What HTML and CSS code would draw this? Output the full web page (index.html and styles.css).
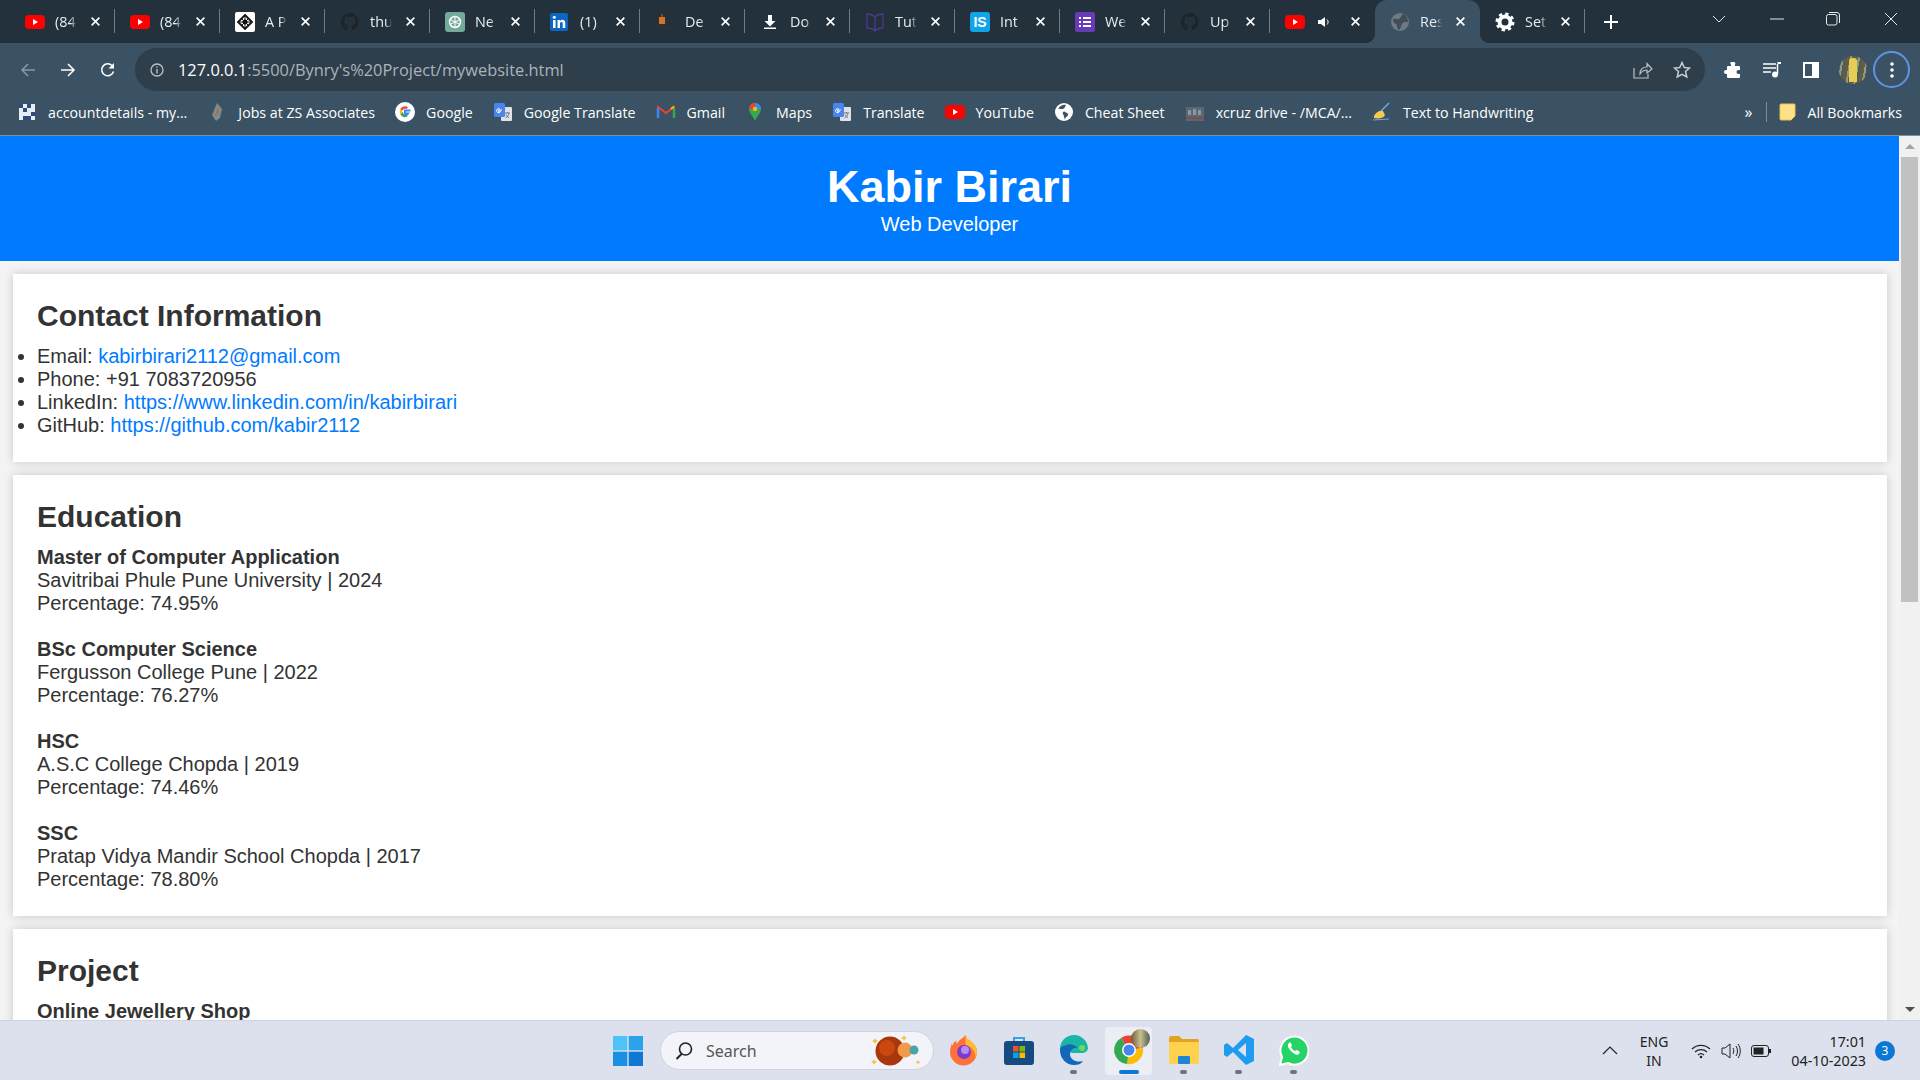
FILE: index.html
```html
<!DOCTYPE html>
<html lang="en">
<head>
<meta charset="utf-8">
<title>Resume</title>
<link rel="stylesheet" href="styles.css">
</head>
<body>
<svg class="defs" width="0" height="0" aria-hidden="true">
  <defs>
    <symbol id="yt" viewBox="0 0 20 20"><rect y="3" width="20" height="14" rx="4" fill="#f00"/><path d="M8 7l5 3-5 3z" fill="#fff"/></symbol>
    <symbol id="gh" viewBox="0 0 20 20"><path d="M10 1a9 9 0 0 0-3 17.500v-3c-2.500.5-3-1-3.200-1.700-.3-.6-1-1.200-.2-1.200.8 0 1.400.8 1.600 1.200.9 1.400 2.200 1 2.700.8.100-.6.300-1 .6-1.300-2.200-.2-4.300-1-4.300-4.500 0-1 .3-1.800.9-2.400-.1-.3-.4-1.200.1-2.400 0 0 .8-.3 2.500.9a8 8 0 0 1 4.600 0c1.700-1.200 2.500-.9 2.500-.9.500 1.200.2 2.100.1 2.400.6.600.9 1.400.9 2.400 0 3.500-2.100 4.300-4.300 4.500.4.300.7.900.7 1.700v3.500A9 9 0 0 0 10 1z" fill="#1d2327"/></symbol>
    <symbol id="gt" viewBox="0 0 20 20"><rect x="8" y="5" width="11" height="14" rx="1" fill="#dfe3e8"/><rect x="1" y="1" width="11" height="14" rx="1.500" fill="#4a84ee"/><path d="M9 8H5.500v1.300h2a2 2 0 1 1-.6-2.100" fill="none" stroke="#fff" stroke-width="1"/><path d="M12 11h5m-2.500-1v1m-2 5c2-1 3-3 3.500-5m-3 1.500c.6 1.500 1.500 2.500 3 3" fill="none" stroke="#6c747c"/></symbol>
    <symbol id="x" viewBox="0 0 10 10"><path d="M1.500 1.500l7 7m0-7l-7 7" stroke="#fff" stroke-width="1.500" fill="none"/></symbol>
  </defs>
</svg>
<div class="desktop">
  <header class="chrome">
    <div class="tabstrip">
      <div class="tab"><svg class="fav" width="20" height="20"><use href="#yt"/></svg><span class="tab-title">(84</span><svg class="tab-x" width="11" height="11"><use href="#x"/></svg></div>
      <div class="tab"><svg class="fav" width="20" height="20"><use href="#yt"/></svg><span class="tab-title">(84</span><svg class="tab-x" width="11" height="11"><use href="#x"/></svg></div>
      <div class="tab"><svg class="fav" width="20" height="20" viewBox="0 0 20 20"><rect width="20" height="20" rx="2" fill="#fff"/><path d="M10 3l7 7-7 7-7-7z" fill="none" stroke="#111" stroke-width="1.800"/><path d="M3 10h14M10 3v14M6 6l8 8M14 6l-8 8" stroke="#111"/><circle cx="10" cy="10" r="2.500" fill="#111"/></svg><span class="tab-title">A P</span><svg class="tab-x" width="11" height="11"><use href="#x"/></svg></div>
      <div class="tab"><svg class="fav" width="20" height="20"><use href="#gh"/></svg><span class="tab-title">thu</span><svg class="tab-x" width="11" height="11"><use href="#x"/></svg></div>
      <div class="tab"><svg class="fav" width="20" height="20" viewBox="0 0 20 20"><rect width="20" height="20" rx="3" fill="#74aa9c"/><circle cx="10" cy="10" r="5.500" fill="none" stroke="#fff" stroke-width="1.500"/><path d="M10 4.500v11M5 7.500l10 5M15 7.500l-10 5" stroke="#fff"/></svg><span class="tab-title">Ne</span><svg class="tab-x" width="11" height="11"><use href="#x"/></svg></div>
      <div class="tab"><svg class="fav" width="18" height="20" viewBox="0 0 18 18"><rect width="18" height="18" rx="2" fill="#0a66c2"/><rect x="3" y="7" width="2.600" height="8" fill="#fff"/><circle cx="4.300" cy="4.300" r="1.500" fill="#fff"/><path d="M7.500 7h2.400v1.200c.5-.8 1.300-1.400 2.500-1.400 2.200 0 2.900 1.300 2.900 3.500V15h-2.600v-4.200c0-1-.3-1.800-1.300-1.800s-1.400.8-1.400 1.800V15H7.500z" fill="#fff"/></svg><span class="tab-title tab-title-li">(1)</span><svg class="tab-x" width="11" height="11"><use href="#x"/></svg></div>
      <div class="tab"><svg class="fav" width="20" height="20" viewBox="0 0 20 20"><path d="M4 5h6v7H4z" fill="#d9731e"/><path d="M6 5V2h2v3" fill="#8a4a12"/><path d="M3 14h6l6 3" fill="none" stroke="#333" stroke-width="1.500"/></svg><span class="tab-title">De</span><svg class="tab-x" width="11" height="11"><use href="#x"/></svg></div>
      <div class="tab"><svg class="fav" width="20" height="20" viewBox="0 0 20 20"><path d="M8 3h4v6h3.500L10 14.500 4.500 9H8zM4 15.500h12V17H4z" fill="#fff"/></svg><span class="tab-title">Do</span><svg class="tab-x" width="11" height="11"><use href="#x"/></svg></div>
      <div class="tab"><svg class="fav" width="20" height="20" viewBox="0 0 20 20"><path d="M10 5C8 3 5 2 2 2v14c3 0 6 1 8 3 2-2 5-3 8-3V2c-3 0-6 1-8 3zm0 0v14" fill="none" stroke="#4c3a8a" stroke-width="1.300"/></svg><span class="tab-title">Tut</span><svg class="tab-x" width="11" height="11"><use href="#x"/></svg></div>
      <div class="tab"><svg class="fav" width="20" height="20" viewBox="0 0 20 20"><rect width="20" height="20" rx="3" fill="#10a5ea"/><text class="fav-text" x="10" y="15">IS</text></svg><span class="tab-title">Int</span><svg class="tab-x" width="11" height="11"><use href="#x"/></svg></div>
      <div class="tab"><svg class="fav" width="20" height="20" viewBox="0 0 20 20"><rect width="20" height="20" rx="2" fill="#673ab7"/><path d="M8 6h8M8 10h8M8 14h8" stroke="#fff" stroke-width="1.800"/><path d="M4 6h2M4 10h2M4 14h2" stroke="#fff" stroke-width="1.800"/></svg><span class="tab-title">We</span><svg class="tab-x" width="11" height="11"><use href="#x"/></svg></div>
      <div class="tab"><svg class="fav" width="20" height="20"><use href="#gh"/></svg><span class="tab-title">Up</span><svg class="tab-x" width="11" height="11"><use href="#x"/></svg></div>
      <div class="tab tab-audio"><svg class="fav" width="20" height="20"><use href="#yt"/></svg><svg class="tab-speaker" width="14" height="14" viewBox="0 0 14 14"><path d="M1 5h3l4-3v10L4 9H1z" fill="#fff"/><path d="M10 4.500c1.500 1.500 1.500 3.500 0 5" fill="none" stroke="#fff"/></svg><svg class="tab-x" width="11" height="11"><use href="#x"/></svg></div>
      <div class="tab tab-active"><svg class="fav" width="20" height="20" viewBox="0 0 20 20"><circle cx="10" cy="10" r="9" fill="#6f7a83"/><path d="M3 7c3-1 4 1 6 0s2-4 4-5c3 1 5 4 5 8-3 0-5 0-6 2s-1 4-3 6c-3-2-1-5-3-6S3 10 3 7z" fill="#3f4d58"/></svg><span class="tab-title">Res</span><svg class="tab-x" width="11" height="11"><use href="#x"/></svg></div>
      <div class="tab tab-last"><svg class="fav" width="20" height="20" viewBox="0 0 20 20"><circle cx="10" cy="10" r="5.500" fill="none" stroke="#fff" stroke-width="4"/><circle cx="10" cy="10" r="8" fill="none" stroke="#fff" stroke-width="3" stroke-dasharray="3.200 3.080"/></svg><span class="tab-title">Set</span><svg class="tab-x" width="11" height="11"><use href="#x"/></svg></div>
      <svg class="newtab" width="16" height="16" viewBox="0 0 16 16"><path d="M8 1v14M1 8h14" stroke="#fff" stroke-width="2"/></svg>
      <div class="winctrl">
        <svg class="win-list" width="14" height="8" viewBox="0 0 14 8"><path d="M1 1l6 6 6-6" fill="none" stroke="#dfe4e8"/></svg>
        <svg class="win-min" width="14" height="2" viewBox="0 0 14 2"><path d="M0 1h14" stroke="#e6eaed"/></svg>
        <svg class="win-max" width="14" height="14" viewBox="0 0 14 14"><rect x=".5" y="2.500" width="10.500" height="10.500" rx="2" fill="none" stroke="#e6eaed"/><path d="M3 .5h8a2.500 2.500 0 0 1 2.500 2.500v8" fill="none" stroke="#e6eaed"/></svg>
        <svg class="win-close" width="14" height="14" viewBox="0 0 14 14"><path d="M1 1l12 12M13 1L1 13" stroke="#e6eaed"/></svg>
      </div>
    </div>
    <div class="toolbar">
      <svg class="nav" width="16" height="16" viewBox="0 0 16 16"><path d="M15 8H2M8 2L2 8l6 6" fill="none" stroke="#8a99a5" stroke-width="1.500"/></svg>
      <svg class="nav" width="16" height="16" viewBox="0 0 16 16"><path d="M1 8h13M8 2l6 6-6 6" fill="none" stroke="#fff" stroke-width="1.500"/></svg>
      <svg class="nav" width="16" height="16" viewBox="0 0 16 16"><path d="M13.500 9.500A6 6 0 1 1 12 3.500" fill="none" stroke="#fff" stroke-width="1.600"/><path d="M14 1v5.500H8.500z" fill="#fff"/></svg>
      <div class="omnibox">
        <svg class="omni-info" width="14" height="14" viewBox="0 0 14 14"><circle cx="7" cy="7" r="6" fill="none" stroke="#b9c2c9" stroke-width="1.300"/><path d="M7 6v4.500M7 3.500v1.300" stroke="#b9c2c9" stroke-width="1.400"/></svg>
        <span class="url"><span class="url-host">127.0.0.1</span>:5500/Bynry's%20Project/mywebsite.html</span>
        <svg class="omni-share" width="20" height="18" viewBox="0 0 20 18"><path d="M1 7v10h14v-4M7 13c0-5 3-7 7-7V2.500L19 8l-5 4V9c-3 0-5 1-7 4z" fill="none" stroke="#b9c2c9" stroke-width="1.200"/></svg>
        <svg class="omni-star" width="18" height="18" viewBox="0 0 18 18"><path d="M9 1.500l2.300 5 5.200.5-4 3.500 1.300 5.500L9 13.300 4.200 16l1.300-5.500-4-3.500 5.200-.5z" fill="none" stroke="#c5ccd2" stroke-width="1.500"/></svg>
      </div>
      <div class="tool-icons">
        <svg width="18" height="18" viewBox="0 0 18 18"><path d="M7 1h3a1.500 1.500 0 0 1 1 2.500V5h4a1 1 0 0 1 1 1v3h-1.500a2 2 0 0 0 0 4H16v3a1 1 0 0 1-1 1H4a1 1 0 0 1-1-1v-3H2a2 2 0 0 1 0-4h1V6a1 1 0 0 1 1-1h3V3.500A1.500 1.500 0 0 1 7 1z" fill="#fff"/></svg>
        <svg width="20" height="16" viewBox="0 0 20 16"><path d="M1 2h13M1 6h13M1 10h8" stroke="#fff" stroke-width="1.500"/><path d="M15.500 2v10" stroke="#fff" stroke-width="1.500"/><path d="M15.500 1H19" stroke="#fff" stroke-width="2"/><circle cx="13" cy="12.500" r="3" fill="#fff"/></svg>
        <svg width="18" height="18" viewBox="0 0 18 18"><rect x="1" y="1" width="16" height="16" fill="#fff"/><rect x="3" y="3" width="7" height="12" fill="#3a5263"/></svg>
        <span class="avatar"><span class="avatar-fig"></span></span>
        <span class="menu-ring"><svg width="4" height="16" viewBox="0 0 4 16"><circle cx="2" cy="2" r="1.800" fill="#fff"/><circle cx="2" cy="8" r="1.800" fill="#fff"/><circle cx="2" cy="14" r="1.800" fill="#fff"/></svg></span>
      </div>
    </div>
    <nav class="bookmarks">
      <span class="bm"><svg width="20" height="16" viewBox="0 0 4 4"><rect width="4" height="4" fill="#e6edf5"/><path d="M0 0h1v1H0zM2 0h1v1H2zM1 1h1v1H1zM3 2h1v1H3zM1 3h2v1H1z" fill="#2d4e7c"/></svg>accountdetails - my...</span>
      <span class="bm"><svg width="20" height="20" viewBox="0 0 14 20"><path d="M7 1l5 6-2 9-4 3-4-6z" fill="#7e8a92"/><path d="M8 5L5 14l4-4z" fill="#c8671f"/></svg>Jobs at ZS Associates</span>
      <span class="bm"><svg width="20" height="20" viewBox="0 0 20 20"><circle cx="10" cy="10" r="10" fill="#fff"/><path d="M15.500 8.500H10v3h3a3.500 3.500 0 0 1-6.500-1.500" fill="none" stroke="#4285f4" stroke-width="2.200"/><path d="M6.300 8a4 4 0 0 1 6-1.800" fill="none" stroke="#ea4335" stroke-width="2.200"/><path d="M6.300 12a4 4 0 0 1 0-4" fill="none" stroke="#fbbc05" stroke-width="2.200"/><path d="M6.300 12a4 4 0 0 0 5.500 1.500" fill="none" stroke="#34a853" stroke-width="2.200"/></svg>Google</span>
      <span class="bm"><svg width="20" height="20"><use href="#gt"/></svg>Google Translate</span>
      <span class="bm"><svg width="20" height="14" viewBox="0 0 18 14"><path d="M1 13V2l8 6 8-6v11" fill="none" stroke="#ea4335" stroke-width="2"/><path d="M1 3v10" stroke="#4285f4" stroke-width="2.500"/><path d="M17 3v10" stroke="#34a853" stroke-width="2.500"/><path d="M14 4l3-2.500" stroke="#fbbc05" stroke-width="2"/></svg>Gmail</span>
      <span class="bm"><svg width="20" height="20" viewBox="0 0 14 20"><path d="M7 19C5 14 1 11 1 7a6 6 0 0 1 12 0c0 4-4 7-6 12z" fill="#34a853"/><path d="M7 1a6 6 0 0 1 6 6L7 7z" fill="#4285f4"/><path d="M1 7a6 6 0 0 1 6-6v6z" fill="#ea4335"/><circle cx="7" cy="7" r="2.200" fill="#fbbc05"/></svg>Maps</span>
      <span class="bm"><svg width="20" height="20"><use href="#gt"/></svg>Translate</span>
      <span class="bm"><svg width="20" height="20"><use href="#yt"/></svg>YouTube</span>
      <span class="bm"><svg width="20" height="18" viewBox="0 0 18 18"><circle cx="9" cy="9" r="9" fill="#fff"/><path d="M3 6c2-1 3 .5 5 0s2-3 3-4c-2-.5-6 0-8 4zm7 11c0-3 2-3 3-5s-2-2-3-3-3 0-2 2 1 3 2 6z" fill="#3a5263"/></svg>Cheat Sheet</span>
      <span class="bm"><svg width="20" height="18" viewBox="0 0 18 18"><rect y="4" width="18" height="14" fill="#5a6873"/><path d="M2 7h3v5H2zM7 6h3v6H7zM12 7h3v5h-3z" fill="#8b98a2"/><rect y="14" width="18" height="2" fill="#854a4a"/></svg>xcruz drive - /MCA/...</span>
      <span class="bm"><svg width="20" height="20" viewBox="0 0 20 20"><path d="M2 14c2-4 6-6 9-5l2 4c-1 3-6 4-11 3z" fill="#f5c94c"/><path d="M9 9l8-8" stroke="#6aa8e8" stroke-width="1.500"/><path d="M1 18l16-1" stroke="#6aa8e8"/></svg>Text to Handwriting</span>
      <span class="bm-more">»</span>
      <span class="bm-sep"></span>
      <span class="bm bm-all"><svg width="20" height="18" viewBox="0 0 16 18"><path d="M1 1h13a1 1 0 0 1 1 1v11l-4 4H1a1 1 0 0 1-1-1V2a1 1 0 0 1 1-1z" fill="#ffe08a" stroke="#e9c44f"/></svg>All Bookmarks</span>
    </nav>
  </header>
  <div class="viewport">
    <div class="page">
      <header class="hero">
        <h1>Kabir Birari</h1>
        <p>Web Developer</p>
      </header>
      <section class="card">
        <h2>Contact Information</h2>
        <ul>
          <li>Email: <a href="#">kabirbirari2112@gmail.com</a></li>
          <li>Phone: +91 7083720956</li>
          <li>LinkedIn: <a href="#">https://www.linkedin.com/in/kabirbirari</a></li>
          <li>GitHub: <a href="#">https://github.com/kabir2112</a></li>
        </ul>
      </section>
      <section class="card">
        <h2>Education</h2>
        <p class="entry"><strong>Master of Computer Application</strong><br>Savitribai Phule Pune University | 2024<br>Percentage: 74.95%</p>
        <p class="entry"><strong>BSc Computer Science</strong><br>Fergusson College Pune | 2022<br>Percentage: 76.27%</p>
        <p class="entry"><strong>HSC</strong><br>A.S.C College Chopda | 2019<br>Percentage: 74.46%</p>
        <p class="entry"><strong>SSC</strong><br>Pratap Vidya Mandir School Chopda | 2017<br>Percentage: 78.80%</p>
      </section>
      <section class="card">
        <h2>Project</h2>
        <p class="entry"><strong>Online Jewellery Shop</strong></p>
      </section>
    </div>
    <div class="scrollbar">
      <span class="sb-up"></span>
      <span class="sb-track"><span class="sb-thumb"></span></span>
      <span class="sb-down"></span>
    </div>
  </div>
  <footer class="taskbar">
    <div class="task-center">
      <svg class="task-start" width="30" height="30" viewBox="0 0 30 30"><rect width="14.300" height="14.300" fill="#4fc3f7"/><rect x="15.700" width="14.300" height="14.300" fill="#2aa3ea"/><rect y="15.700" width="14.300" height="14.300" fill="#1a8fe3"/><rect x="15.700" y="15.700" width="14.300" height="14.300" fill="#0f78d4"/></svg>
      <div class="search">
        <svg width="20" height="20" viewBox="0 0 20 20"><circle cx="11.500" cy="8" r="6" fill="none" stroke="#222" stroke-width="1.600"/><path d="M7.500 13l-5 5" stroke="#222" stroke-width="2"/></svg>
        <span class="search-label">Search</span>
        <svg class="search-art" width="58" height="34" viewBox="0 0 58 34"><circle cx="19" cy="17" r="14.500" fill="#a8380b"/><circle cx="16" cy="14" r="8" fill="#c9480f"/><circle cx="34" cy="16" r="7.500" fill="#f09a4a"/><circle cx="43" cy="16" r="4.500" fill="#4ca3a8"/><path d="M4 4l1 2 2 1-2 1-1 2-1-2-2-1 2-1zM3 25l1 2 2 1-2 1-1 2-1-2-2-1 2-1zM33 1l1 2 2 1-2 1-1 2-1-2-2-1 2-1zM47 26l.8 1.500 1.500.8-1.500.8-.8 1.500-.8-1.500-1.500-.8 1.500-.8z" fill="#f3c13c"/></svg>
      </div>
      <span class="task-app task-first"><svg width="30" height="32" viewBox="0 0 30 32"><path d="M3 9c0 1 0 2 .5 2.500C4 9 6 7 7.500 6.500 7 8 7 9 8 9.500 10 6 14 4 17 1c0 3 1 4 3 5 3 2 8 6 8 12a13.500 13.500 0 0 1-27 0c0-3 1-6 2-9z" fill="#ff7139"/><path d="M17 1c0 3 1 4 3 5 3 2 8 6 8 12 0 2-.5 4-1.500 6C27 16 21 12 17 11c-1-3-1-7 0-10z" fill="#ffbd2e"/><circle cx="15" cy="18" r="7" fill="#7a3ec8"/><circle cx="16" cy="16" r="4" fill="#b58cff"/></svg></span>
      <span class="task-app"><svg width="30" height="30" viewBox="0 0 30 30"><path d="M10 7V3h10v4" fill="none" stroke="#3aa0e6" stroke-width="2"/><rect y="6" width="30" height="24" rx="3" fill="#164a80"/><rect x="9" y="11" width="5.500" height="5.500" fill="#f25022"/><rect x="15.500" y="11" width="5.500" height="5.500" fill="#7fba00"/><rect x="9" y="17.500" width="5.500" height="5.500" fill="#00a4ef"/><rect x="15.500" y="17.500" width="5.500" height="5.500" fill="#ffb900"/></svg></span>
      <span class="task-app task-open"><svg width="32" height="32" viewBox="0 0 32 32"><path d="M2 16a14 14 0 0 1 28-2c0 3-3 5-7 5H14c-3 0-3-4 0-5" fill="#1cb5a5"/><path d="M2 16c0 9 7 15 14 15 4 0 7-1 9-4-6 2-13-1-13-7 0-4 4-7 8-6-3-3-8-5-12-3-3 1-6 2-6 5z" fill="#1167b8"/><circle cx="24" cy="14" r="3" fill="#6bdc5a"/></svg></span>
      <span class="task-app task-open task-active"><svg width="32" height="32" viewBox="0 0 32 32"><path d="M16 16L8 4a14 14 0 0 1 22 10z" fill="#ea4335"/><path d="M16 16L30 14a14 14 0 0 1-16 16z" fill="#fbbc05"/><path d="M16 16l-2 14A14 14 0 0 1 8 4z" fill="#34a853"/><circle cx="16" cy="16" r="7" fill="#fff"/><circle cx="16" cy="16" r="5.500" fill="#4285f4"/></svg><span class="task-badge"></span></span>
      <span class="task-app task-open"><svg width="30" height="28" viewBox="0 0 30 28"><path d="M0 2a2 2 0 0 1 2-2h8l3 3h15a2 2 0 0 1 2 2v4H0z" fill="#e0a420"/><path d="M0 6h30v20a2 2 0 0 1-2 2H2a2 2 0 0 1-2-2z" fill="#ffd24d"/><rect x="9" y="20" width="12" height="8" rx="1" fill="#1f86d6"/></svg></span>
      <span class="task-app task-open"><svg width="30" height="30" viewBox="0 0 30 30"><path d="M22 0l8 4v22l-8 4L9 17l-6 5-3-2v-10l3-2 6 5z" fill="#1f9cf0"/><path d="M22 8l-8 7 8 7z" fill="#dfe2ee"/></svg></span>
      <span class="task-app task-open"><svg width="30" height="32" viewBox="0 0 30 32"><path d="M1 31l2-8a14 14 0 1 1 6 6z" fill="#25d366" stroke="#fff" stroke-width="2"/><path d="M10 9c-2 2-1 5 2 8s6 5 8 3l1-2-3-2-2 1c-2-1-3-2-4-4l1-2-2-3z" fill="#fff"/></svg></span>
    </div>
    <div class="tray">
      <svg class="tray-chev" width="16" height="9" viewBox="0 0 16 9"><path d="M1 8l7-7 7 7" fill="none" stroke="#222" stroke-width="1.200"/></svg>
      <span class="lang">ENG<br>IN</span>
      <svg width="20" height="16" viewBox="0 0 20 16"><path d="M1 6a13 13 0 0 1 18 0M4 9a9 9 0 0 1 12 0M7 12a4.500 4.500 0 0 1 6 0" fill="none" stroke="#222" stroke-width="1.200"/><circle cx="10" cy="14" r="1.300" fill="#222"/></svg>
      <svg width="20" height="16" viewBox="0 0 20 16"><path d="M1 5h3l5-4v14l-5-4H1z" fill="none" stroke="#222"/><path d="M12 5c1 2 1 4 0 6M15 3c2 3 2 7 0 10M17 1c3 4 3 10 0 14" fill="none" stroke="#222"/></svg>
      <svg width="20" height="12" viewBox="0 0 20 12"><rect x=".5" y=".5" width="17" height="11" rx="2.500" fill="none" stroke="#222"/><rect x="2.500" y="2.500" width="10" height="7" fill="#222"/><rect x="18" y="4" width="2" height="4" fill="#222"/></svg>
      <span class="clock">17:01<br>04-10-2023</span>
      <span class="notif">3</span>
    </div>
  </footer>
</div>
</body>
</html>
```
FILE: styles.css
```css
* { box-sizing: border-box; }
html, body { margin: 0; height: 100%; overflow: hidden; }
.defs { position: absolute; }
.desktop { width: 1920px; height: 1080px; display: flex; flex-direction: column; font-family: "Liberation Sans", Arial, sans-serif; }

.chrome { flex: none; background: #3a5263; color: #fff; font-family: "Open Sans", "Noto Sans", sans-serif; }

.tabstrip { height: 43px; background: #22313c; display: flex; align-items: center; padding-left: 10px; }
.tab { width: 105px; height: 43px; flex: none; display: flex; align-items: center; padding-left: 15px; position: relative; }
.tab::after { content: ""; position: absolute; right: 0; top: 9px; width: 1px; height: 24px; background: #6e7d88; }
.tab-audio::after { display: none; }
.tab-active { background: #3a5263; border-radius: 12px 12px 0 0; }
.tab-active::before, .tab-active::after { content: ""; position: absolute; bottom: 0; top: auto; width: 10px; height: 10px; }
.tab-active::before { left: -10px; background: radial-gradient(circle at 0 0, #22313c 10px, #3a5263 10.5px); }
.tab-active::after { right: -10px; background: radial-gradient(circle at 100% 0, #22313c 10px, #3a5263 10.5px); }
.fav { flex: none; }
.fav-text { font: 700 14px "Liberation Sans", sans-serif; fill: #fff; text-anchor: middle; }
.tab-title { width: 22px; margin-left: 10px; overflow: hidden; white-space: nowrap; font-size: 14.400px; color: #e8ecef; flex: none; -webkit-mask-image: linear-gradient(90deg, #000 70%, transparent); mask-image: linear-gradient(90deg, #000 70%, transparent); }
.tab-title-li { margin-left: 12px; }
.tab-speaker { margin-left: 12px; margin-right: 6px; flex: none; }
.tab-x { margin-left: 13px; flex: none; }
.newtab { margin-left: 18px; flex: none; }
.winctrl { margin-left: auto; display: flex; align-items: center; height: 37px; padding-right: 22px; align-self: flex-start; }
.win-list { margin-right: 44px; }
.win-min { margin-right: 42px; }
.win-max { margin-right: 44px; }

.toolbar { height: 48px; display: flex; align-items: center; padding: 5px 0 0 20px; }
.nav { margin-right: 24px; flex: none; }
.omnibox { margin-left: -5px; width: 1570px; height: 43px; flex: none; border-radius: 22px; background: #2f3e4b; display: flex; align-items: center; padding: 0 14px 0 15px; }
.omni-info { flex: none; }
.url { margin-left: 14px; font-size: 16.400px; color: #a9b4bc; white-space: nowrap; flex: 1; }
.url-host { color: #fff; }
.omni-share { margin-right: 20px; }
.tool-icons { display: flex; align-items: center; gap: 20px; margin-left: 19px; }
.avatar { width: 28px; height: 28px; border-radius: 50%; background: repeating-linear-gradient(100deg, #6d5a3e 0 3px, #8f9a82 3px 5px, #4d5f58 5px 8px); display: flex; justify-content: center; margin-left: -1px; }
.avatar-fig { width: 8px; height: 24px; background: #e6cd55; margin-top: 2px; border-radius: 3px 3px 0 0; }
.menu-ring { width: 37px; height: 37px; border-radius: 50%; border: 2px solid #5f93e6; display: flex; align-items: center; justify-content: center; margin-left: -14px; }

.bookmarks { height: 45px; display: flex; align-items: center; padding: 0 0 2px 17px; font-size: 14.200px; border-bottom: 1px solid #7f8e99; white-space: nowrap; }
.bm { display: flex; align-items: center; gap: 11px; margin-right: 20px; flex: none; }
.bm-more { margin-left: auto; font-size: 16px; margin-right: 14px; }
.bm-sep { width: 1px; height: 20px; background: #7d8c97; margin-right: 11px; }
.bm-all { margin-right: 18px; gap: 9px; }

.viewport { flex: 1; min-height: 0; display: flex; overflow: hidden; }
.page { flex: 1; min-width: 0; background: #f4f4f4; color: #333; font-size: 20px; line-height: 23px; }
.hero { background: #007bff; color: #fff; text-align: center; padding-top: 25px; height: 125px; }
.hero h1 { margin: 0; font-size: 45px; line-height: 52px; font-weight: 700; }
.hero p { margin: 0; }
.card { background: #fff; margin: 13px 12px 0 13px; padding: 24px 24px 25px; box-shadow: 0 0 10px rgba(0,0,0,.18); }
.card h2 { margin: 0 0 12px; font-size: 30px; line-height: 35px; font-weight: 700; }
.card ul { margin: 0; padding: 0; }
.entry { margin: 0 0 23px; }
.entry:last-child { margin-bottom: 0; }
a { color: #007bff; text-decoration: none; }

.scrollbar { width: 21px; flex: none; background: #f1f1f1; display: flex; flex-direction: column; position: relative; }
.sb-up, .sb-down { height: 21px; flex: none; display: flex; align-items: center; justify-content: center; }
.sb-up::before { content: ""; border: 5px solid transparent; border-top: 0; border-bottom: 5px solid #a3a3a3; }
.sb-down::before { content: ""; border: 5px solid transparent; border-bottom: 0; border-top: 5px solid #505050; }
.sb-track { flex: 1; }
.sb-thumb { display: block; height: 445px; background: #c1c1c1; margin: 0 2px; }

.taskbar { height: 60px; flex: none; background: #dde1ee; position: relative; display: flex; align-items: center; border-top: 1px solid #cfd3e0; font-family: "Noto Sans", "Open Sans", sans-serif; color: #222; }
.task-center { display: flex; align-items: center; margin-left: 613px; }
.task-start { flex: none; }
.search { width: 274px; height: 39px; border-radius: 20px; background: #f3f4f9; border: 1px solid #d0d3dd; margin-left: 17px; display: flex; align-items: center; padding-left: 13px; flex: none; }
.search-label { font-size: 16px; color: #555; margin-left: 12px; }
.search-art { margin-left: auto; margin-right: 4px; }
.task-app { width: 55px; height: 48px; display: flex; align-items: center; justify-content: center; position: relative; flex: none; }
.task-app svg { margin-bottom: 2px; }
.task-first { margin-left: 2px; }
.task-open::after { content: ""; position: absolute; bottom: 1px; left: 24px; width: 7px; height: 4px; border-radius: 2px; background: #70737c; }
.task-active { width: 47px; margin: 0 4px; background: #eceef6; border-radius: 4px; }
.task-active::after { left: 14px; width: 20px; background: #0a78d4; }
.task-badge { position: absolute; top: 2px; right: 2px; width: 19px; height: 19px; border-radius: 50%; background: linear-gradient(90deg, #6d5a3e, #c9c08c, #4d5f58); }
.tray { margin-left: auto; display: flex; align-items: center; gap: 10px; padding-right: 25px; }
.tray-chev { margin-right: 12px; }
.lang { font-size: 14px; line-height: 19px; text-align: center; margin-right: 13px; }
.clock { font-size: 14.300px; line-height: 19px; text-align: right; margin-left: 10px; margin-right: -1px; }
.notif { width: 20px; height: 20px; border-radius: 50%; background: #0a78d4; color: #fff; font-size: 12px; display: flex; align-items: center; justify-content: center; }
```
